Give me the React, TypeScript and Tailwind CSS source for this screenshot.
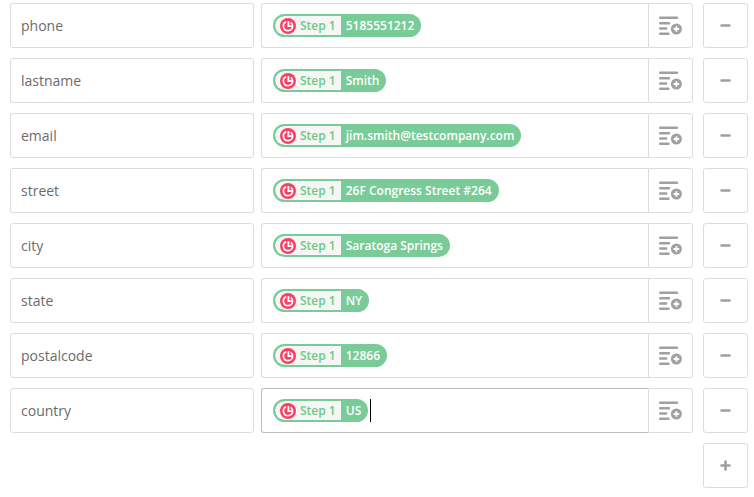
import React from 'react';

interface Field {
  key: string;
  value: string;
  active?: boolean;
}

const fields: Field[] = [
  { key: 'phone', value: '5185551212' },
  { key: 'lastname', value: 'Smith' },
  { key: 'email', value: 'jim.smith@testcompany.com' },
  { key: 'street', value: '26F Congress Street #264' },
  { key: 'city', value: 'Saratoga Springs' },
  { key: 'state', value: 'NY' },
  { key: 'postalcode', value: '12866' },
  { key: 'country', value: 'US', active: true }
];

const ClockLogo = () => (
  <svg className="w-4 h-4 flex-shrink-0" viewBox="0 0 16 16" fill="none" aria-hidden="true">
    <circle cx="8" cy="8" r="8" fill="#fb3f63" />
    <path d="M6.2 3.8A4.6 4.6 0 1 0 12.6 8.3C12.6 6.6 11.9 5.2 10.8 4.4" stroke="#ffffff" strokeWidth="1.7" />
    <path d="M8.4 3v5.2h3.6" stroke="#ffffff" strokeWidth="1.8" />
  </svg>
);

const InsertIcon = () => (
  <svg className="w-[23px] h-[19px]" viewBox="0 0 23 19" fill="none" aria-hidden="true">
    <path
      d="M1.2 1.8h16.8M1.2 7.3h8.8M1.2 12.5h6M1.2 17.7h8.3"
      stroke="#a0a0a0"
      strokeWidth="2.4"
      strokeLinecap="round"
    />
    <circle cx="17.4" cy="13" r="5.5" fill="#a0a0a0" />
    <path d="M17.4 10.2v5.6M14.6 13h5.6" stroke="#ffffff" strokeWidth="1.8" />
  </svg>
);

const MinusIcon = () => (
  <svg className="w-[11px] h-[11px]" viewBox="0 0 11 11" aria-hidden="true">
    <path d="M1.5 5.5h8" stroke="#a0a0a0" strokeWidth="2.4" strokeLinecap="round" />
  </svg>
);

const PlusIcon = () => (
  <svg className="w-[11px] h-[11px]" viewBox="0 0 11 11" aria-hidden="true">
    <path d="M1.5 5.5h8M5.5 1.5v8" stroke="#a0a0a0" strokeWidth="2.6" strokeLinecap="round" />
  </svg>
);

const StepPill = ({ value }: { value: string }) => (
  <span className="flex-shrink-0 inline-flex items-stretch h-[23px] rounded-full border-2 border-[#79cb98] bg-[#79cb98] overflow-hidden text-xs font-semibold leading-[19px] whitespace-nowrap">
    <span className="flex items-center gap-1 rounded-l-full bg-[#f6f6f6] px-[5px] text-[#6cc97f]">
      <ClockLogo />
      <span>Step 1</span>
    </span>
    <span className="px-[5px] text-white">{value}</span>
  </span>
);

const FieldRow = ({ field }: { field: Field }) => (
  <div className="grid grid-cols-[minmax(0,244fr)_minmax(0,432fr)_48px] gap-x-[7px]">
    <input
      type="text"
      aria-label={`${field.key} name`}
      defaultValue={field.key}
      className="w-full h-[45px] px-[10px] rounded-[3px] border border-[#dcdcdc] bg-white text-sm text-[#6b6b6b] outline-none"
    />
    <div className="flex h-[45px]">
      <div
        className={`flex-1 min-w-0 flex items-center pl-[11px] rounded-l-[3px] border border-r-0 ${
          field.active ? 'border-[#bdbdbd]' : 'border-[#dcdcdc]'
        }`}
      >
        <StepPill value={field.value} />
        {field.active && <span className="ml-0.5 w-px h-[23px] bg-black" />}
        <input
          type="text"
          aria-label={`${field.key} value`}
          className="flex-1 min-w-0 bg-transparent text-sm outline-none"
        />
      </div>
      <button
        type="button"
        aria-label={`Insert a field into ${field.key}`}
        className="w-[45px] flex items-center justify-center rounded-r-[3px] border border-[#dcdcdc]"
      >
        <InsertIcon />
      </button>
    </div>
    <button
      type="button"
      aria-label={`Remove ${field.key}`}
      className="ml-[3px] h-[45px] flex items-center justify-center rounded-[3px] border border-[#dcdcdc]"
    >
      <MinusIcon />
    </button>
  </div>
);

const App: React.FC = () => {
  return (
    <form className="flex flex-col gap-[10px] bg-white pt-[3px] pl-[10px] pr-[6px] pb-[9px] font-['Open_Sans','Noto_Sans',sans-serif]">
      {fields.map((field) => (
        <FieldRow key={field.key} field={field} />
      ))}
      <div className="flex justify-end">
        <button
          type="button"
          aria-label="Add field"
          className="w-[45px] h-[45px] flex items-center justify-center rounded-[3px] border border-[#dcdcdc]"
        >
          <PlusIcon />
        </button>
      </div>
    </form>
  );
};

export default App;
